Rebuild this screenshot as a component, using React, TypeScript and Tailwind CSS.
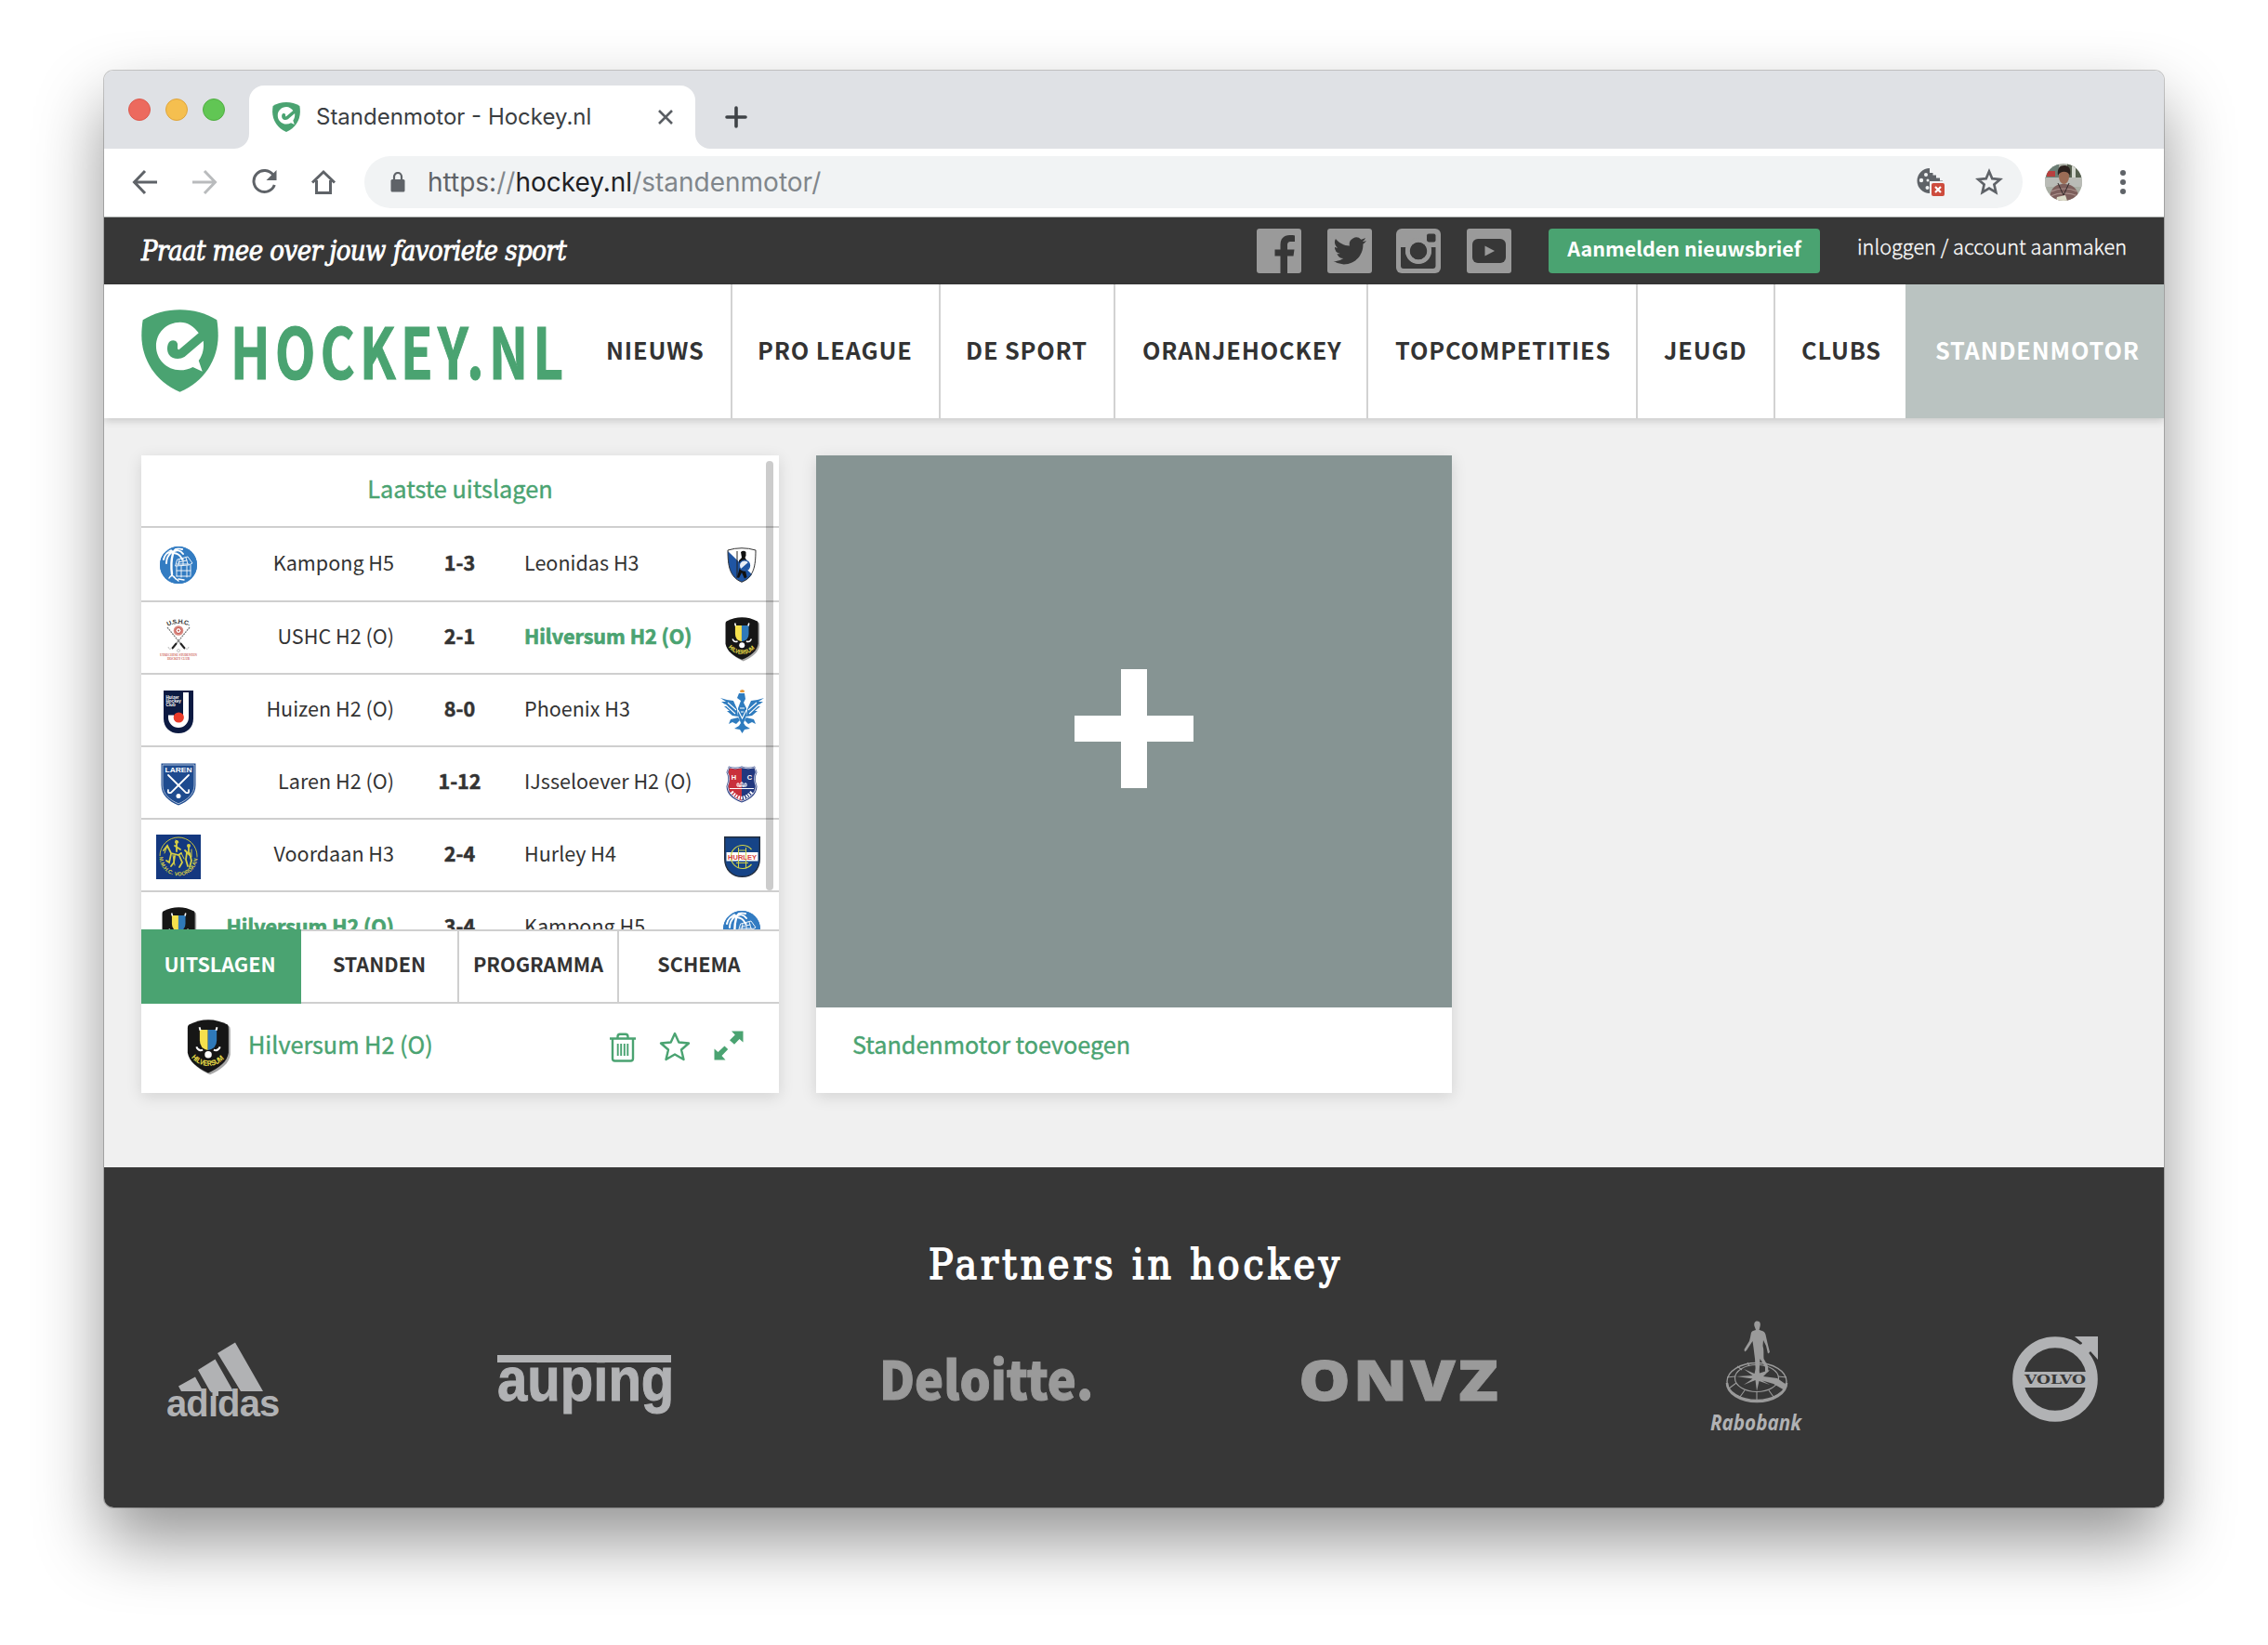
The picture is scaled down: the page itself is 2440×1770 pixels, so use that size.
import type { ReactNode } from "react";

const SANS = "font-['Noto_Sans_CJK_SC','Noto_Sans',sans-serif]";
const UI = "font-['Inter','Roboto',sans-serif]";
const SERIF = "font-['DejaVu_Serif_Condensed','DejaVu_Serif',serif]";

/* ---------- site mark ---------- */

function Shield({ className }: { className: string }) {
  return (
    <svg viewBox="36 40 250 267" preserveAspectRatio="none" className={className}>
      <path
        fill="#4aa371"
        d="M161 41C205 41 245 52 281 74C284 92 285 110 285 125C285 200 240 275 161 306C82 275 37 200 37 125C37 110 38 92 41 74C77 52 117 41 161 41Z"
      />
      <path
        fill="#fff"
        d="M222 116L158 170C149 168 157 155 152 147C147 139 137 138 129 143C118 152 118 175 126 186C137 201 160 202 176 193L237 141C240 162 236 186 222 205L234 240L203 226C190 233 176 236 162 236C118 236 84 201 84 158C84 115 118 81 162 81C186 81 208 95 222 116Z"
      />
    </svg>
  );
}

/* ---------- browser chrome ---------- */

function TabStrip() {
  return (
    <div className="flex h-[84px] items-end bg-[#dfe1e5]">
      <div className="flex h-[84px] w-[156px] items-center gap-4 pl-[26px]">
        <span className="size-6 rounded-full border border-[#dc5a4e] bg-[#ec6a5e]" />
        <span className="size-6 rounded-full border border-[#dfa53c] bg-[#f5bf4f]" />
        <span className="size-6 rounded-full border border-[#50ae41] bg-[#61c654]" />
      </div>
      <div className="relative flex h-[68px] w-[480px] items-center rounded-t-[16px] bg-white pr-6 pl-[25px]">
        <svg viewBox="0 0 16 16" className="absolute bottom-0 -left-4 size-4 fill-white">
          <path d="M16 0V16H0A16 16 0 0 0 16 0Z" />
        </svg>
        <svg viewBox="0 0 16 16" className="absolute -right-4 bottom-0 size-4 fill-white">
          <path d="M0 0V16H16A16 16 0 0 1 0 0Z" />
        </svg>
        <Shield className="h-8 w-[30px]" />
        <span className={`ml-[17px] flex-1 text-[24px] leading-8 whitespace-nowrap text-[#3a3e42] ${UI}`}>
          Standenmotor - Hockey.nl
        </span>
        <svg viewBox="0 0 16 16" className="size-4 fill-none stroke-[#5a5e63]" strokeWidth="2.6">
          <path d="M1 1L15 15M15 1L1 15" />
        </svg>
      </div>
      <svg viewBox="0 0 24 24" className="mb-[22px] ml-8 size-6 fill-none stroke-[#3f4347]" strokeWidth="3.6" strokeLinecap="round">
        <path d="M12 2V22M2 12H22" />
      </svg>
    </div>
  );
}

function Avatar() {
  return (
    <svg viewBox="0 0 40 40" className="size-10 rounded-full">
      <rect width="40" height="40" fill="#a9aea4" />
      <rect width="15" height="16" fill="#6c7f76" />
      <rect x="2" y="8" width="9" height="6" fill="#b8403f" />
      <rect x="24" width="16" height="15" fill="#56604f" />
      <rect x="29" y="2" width="4" height="14" fill="#d5d8d0" />
      <rect y="15" width="40" height="10" fill="#b9bbb6" />
      <path d="M5 40C5 26 12 22 20 22C29 22 36 26 37 40Z" fill="#7d5f5c" />
      <path d="M7 30C15 26 26 26 35 30M6 35C15 31 26 31 36 35" stroke="#a98f8a" strokeWidth="1.2" fill="none" />
      <path d="M14 21L20 34L26 21" stroke="#33292a" strokeWidth="1" fill="none" />
      <ellipse cx="20.500" cy="14" rx="5.500" ry="8" fill="#9c6c56" />
      <path d="M14 13C13 5 16 2 21 2C27 2 28 7 27 13C25 8 17 7 14 13Z" fill="#2b201d" />
      <path d="M13 36L22 34L24 40H12Z" fill="#dcdcc9" />
    </svg>
  );
}

function Toolbar() {
  return (
    <div className="flex h-[74px] items-center border-b border-[#a9adab] bg-white pb-[1px]">
      <svg viewBox="0 0 28 28" className="ml-[30px] size-7 fill-none stroke-[#5f6368]" strokeWidth="3">
        <path d="M27 14H3M14 2L2.500 14L14 26" />
      </svg>
      <svg viewBox="0 0 28 28" className="ml-9 size-7 fill-none stroke-[#b9bbbd]" strokeWidth="3">
        <path d="M1 14H25M14 2L25.500 14L14 26" />
      </svg>
      <svg viewBox="0 0 28 28" className="ml-9 size-7 fill-none stroke-[#5f6368]" strokeWidth="3">
        <path d="M24 6.500A11.500 11.500 0 1 0 25.300 17" />
        <path d="M27.500 1V12H16.500Z" fill="#5f6368" stroke="none" />
      </svg>
      <svg viewBox="0 0 28 28" className="ml-9 size-7 fill-none stroke-[#5f6368]" strokeWidth="3">
        <path d="M2 14.500L14 3L26 14.500M6.500 12V25.500H21.500V12" />
      </svg>
      <div className="ml-[30px] flex h-14 w-[1784px] items-center rounded-full bg-[#f1f3f4] pr-[21px] pl-7">
        <svg viewBox="0 0 16 22" className="h-[22px] w-4 fill-none stroke-[#5f6368]" strokeWidth="2.200">
          <path d="M4 9V5A4 4 0 0 1 12 5V9" />
          <rect x="0.500" y="8" width="15" height="13.500" rx="1.500" fill="#5f6368" stroke="none" />
        </svg>
        <span className={`ml-[24px] flex-1 text-[28px] leading-9 whitespace-nowrap text-[#80868b] ${UI}`}>
          <span className="text-[#5f6368]">https:</span>//<span className="text-[#202124]">hockey.nl</span>/standenmotor/
        </span>
        <svg viewBox="0 0 32 32" className="h-8 w-8">
          <path
            fill="#5f6368"
            d="M16 1A13.500 13.500 0 1 0 16 28V16H30V14.500H27V11.500H23V8.500H19.500V6H16Z"
          />
          <g fill="#f1f3f4">
            <circle cx="12" cy="8" r="2" />
            <circle cx="7" cy="14" r="2.200" />
            <circle cx="14" cy="14" r="1.500" />
            <circle cx="13.500" cy="22" r="2" />
          </g>
          <rect x="16" y="15" width="16" height="17" fill="#f1f3f4" />
          <rect x="18" y="17" width="14" height="14" rx="2" fill="#cd4c3d" />
          <path d="M22 21L28 27M28 21L22 27" stroke="#fff" strokeWidth="2.200" />
        </svg>
        <svg viewBox="0 0 30 30" className="ml-[33px] h-[30px] w-[30px] fill-none stroke-[#5f6368]" strokeWidth="2.700">
          <path d="M15 3.500L18.300 11.200L26.800 12L20.400 17.600L22.300 26L15 21.600L7.700 26L9.600 17.600L3.200 12L11.700 11.200Z" />
        </svg>
      </div>
      <div className="ml-6">
        <Avatar />
      </div>
      <div className="ml-[41px] flex flex-col gap-1">
        <span className="size-1.5 rounded-full bg-[#5f6368]" />
        <span className="size-1.5 rounded-full bg-[#5f6368]" />
        <span className="size-1.5 rounded-full bg-[#5f6368]" />
      </div>
    </div>
  );
}

/* ---------- site header ---------- */

function SocialIcons() {
  return (
    <div className="flex">
      <svg viewBox="0 0 48 48" className="size-12">
        <rect width="48" height="48" rx="3" fill="#9a9a9a" />
        <path fill="#373737" d="M25.500 48V29.500H19.500V22.500H25.500V17C25.500 10.500 29.500 7 35.500 7C38 7 40 7.200 41 7.400V14H37C33.800 14 33 15.500 33 18V22.500H40.500L39.500 29.500H33V48Z" />
      </svg>
      <svg viewBox="0 0 48 48" className="ml-7 size-12">
        <rect width="48" height="48" rx="3" fill="#9a9a9a" />
        <path
          transform="translate(6.500 6.200) scale(1.480)"
          fill="#373737"
          d="M23.950 4.570a10 10 0 0 1-2.820.770 4.960 4.960 0 0 0 2.160-2.720c-.950.550-2 .950-3.130 1.180a4.920 4.920 0 0 0-8.380 4.480C7.690 8.100 4.070 6.130 1.640 3.160a4.820 4.820 0 0 0-.670 2.480c0 1.710.870 3.210 2.190 4.100a4.900 4.900 0 0 1-2.230-.620v.060a4.920 4.920 0 0 0 3.950 4.830 5 5 0 0 1-2.210.080 4.940 4.940 0 0 0 4.600 3.420A9.870 9.870 0 0 1 0 19.540a13.990 13.990 0 0 0 7.560 2.210c9.050 0 14-7.500 14-13.980 0-.210 0-.420-.020-.630a9.940 9.940 0 0 0 2.460-2.550z"
        />
      </svg>
      <svg viewBox="0 0 48 48" className="ml-[26px] size-12">
        <rect width="48" height="48" rx="6" fill="#9a9a9a" />
        <rect x="33" y="5.500" width="9.500" height="9" rx="2" fill="#373737" />
        <path fill="#373737" d="M5 20H10.500A14 14 0 1 0 37.500 20H42.500V40Q42.500 43 39.500 43H8Q5 43 5 40Z" />
        <circle cx="24" cy="24" r="9.500" fill="#373737" />
        <circle cx="24" cy="24" r="11.700" fill="none" stroke="#9a9a9a" strokeWidth="4.600" />
      </svg>
      <svg viewBox="0 0 48 48" className="ml-7 size-12">
        <rect width="48" height="48" rx="3" fill="#9a9a9a" />
        <rect x="6" y="11" width="36" height="26" rx="6" fill="#373737" />
        <path d="M19.500 18.500L30 24L19.500 29.500Z" fill="#9a9a9a" />
      </svg>
    </div>
  );
}

function TopBar() {
  return (
    <div className="flex h-[72px] items-center bg-[#373737] pr-10 pl-10 text-white">
      <span className={`flex-1 text-[29px] leading-9 tracking-[-0.550px] whitespace-nowrap italic [-webkit-text-stroke:0.800px_white] ${SERIF}`}>
        Praat mee over jouw favoriete sport
      </span>
      <SocialIcons />
      <button className="ml-10 h-12 w-[292px] rounded bg-[#4aa371] pb-[6px] text-center text-[21.500px] leading-[42px] font-bold whitespace-nowrap">
        Aanmelden nieuwsbrief
      </button>
      <span className="ml-10 w-[290px] pb-[10px] text-[21.700px] leading-8 font-light whitespace-nowrap [-webkit-text-stroke:0.300px_white]">
        inloggen / account aanmaken
      </span>
    </div>
  );
}

const NAV: [string, string][] = [
  ["NIEUWS", "w-[163px] pl-[27px]"],
  ["PRO LEAGUE", "w-[224px] pl-[27px]"],
  ["DE SPORT", "w-[188px] pl-[27px]"],
  ["ORANJEHOCKEY", "w-[272px] pl-[29px]"],
  ["TOPCOMPETITIES", "w-[290px] pl-[29px]"],
  ["JEUGD", "w-[148px] pl-7"],
  ["CLUBS", "w-[140px] pl-7"],
];

function NavBar() {
  return (
    <div className="relative z-10 flex h-[144px] bg-white shadow-[0_3px_8px_rgba(0,0,0,0.160)]">
      <div className="flex w-[513px] pl-10">
        <Shield className="mt-[27px] h-[89px] w-[83px]" />
        <div className="ml-[13px] h-[144px] w-[360px]">
          <div className="origin-left scale-x-[0.750] text-[75px] leading-[139px] font-bold tracking-[7.200px] whitespace-nowrap text-[#4aa371] [-webkit-text-stroke:1.200px_#4aa371]">
            HOCKEY.NL
          </div>
        </div>
      </div>
      {NAV.map(([label, box], i) => (
        <div
          key={label}
          className={`flex items-center pb-[3px] text-[25.300px] font-bold tracking-[0.850px] whitespace-nowrap text-[#333] ${box} ${i < 6 ? "border-r-2 border-[#d2d2d2]" : ""}`}
        >
          {label}
        </div>
      ))}
      <div className="flex flex-1 items-center bg-[#bac3c1] pb-[3px] pl-8 text-[25.300px] font-bold tracking-[0.850px] whitespace-nowrap text-white">
        STANDENMOTOR
      </div>
    </div>
  );
}

/* ---------- club crests ---------- */

function Kampong() {
  return (
    <svg viewBox="0 0 40 40" className="size-10">
      <circle cx="20" cy="20" r="20" fill="#337cc2" />
      <g fill="none" stroke="#fff" strokeLinecap="round">
        <path strokeWidth="2" d="M12 6C8 6 5 9 4 14M13 6C9 9 7 13 7 18M14 6C18 3 22 4 25 8M14 7C18 7 22 9 24 14M13 5C10 2.500 8 4 6 6M15 5C17 2 21 1.500 24 3" />
        <path strokeWidth="2.400" d="M14 8C12 15 12 22 13 30" />
        <path strokeWidth="0.900" d="M19 14L30 11L35 18L31 20L17 21ZM20 17L29 15M18 19H31M18 21V32M23 21V33M29 21V33M33 20V31M18 26H33M18 32L33 32M21 14L20 20M25 13L25 20M28 12L30 19" />
        <path strokeWidth="1.500" d="M10 34C12 30 15 31 17 35M15 33L20 37M20 35L26 36" />
      </g>
      <circle cx="20" cy="20" r="19.300" fill="none" stroke="#337cc2" strokeWidth="1.400" />
    </svg>
  );
}

function Ushc() {
  return (
    <svg viewBox="0 0 40 44" className="h-[44px] w-10 overflow-visible">
      <path id="ushc-arc" d="M8.500 8Q20 2 33 8" fill="none" />
      <text fontSize="6.800" fontWeight="700" fontFamily="Liberation Sans, sans-serif" fill="#333">
        <textPath href="#ushc-arc" textLength="24">U.S.H.C.</textPath>
      </text>
      <path d="M8 9L26 31M32 9L14 31" stroke="#777" strokeWidth="1.200" strokeDasharray="2 0.800" />
      <path d="M22 26L27 32M18 26L13 32" stroke="#222" strokeWidth="2" />
      <path d="M27 31Q30 34 31 30M13 31Q10 34 9 30" stroke="#bbb" strokeWidth="1" fill="none" />
      <circle cx="20" cy="12.500" r="5.300" fill="#d98880" />
      <circle cx="20" cy="12.500" r="3" fill="#fff" stroke="#c0504a" strokeWidth="1" />
      <circle cx="20" cy="12.500" r="1" fill="#c0504a" />
      <circle cx="20" cy="34" r="1.500" fill="none" stroke="#aaa" strokeWidth="0.700" />
      <text x="20" y="39.500" textAnchor="middle" textLength="40" fontSize="3.400" fontWeight="700" fontFamily="Liberation Serif, serif" fill="#cf6a62">UTRECHTSE STUDENTEN</text>
      <text x="20" y="43.700" textAnchor="middle" textLength="24" fontSize="3.400" fontWeight="700" fontFamily="Liberation Serif, serif" fill="#cf6a62">HOCKEY CLUB</text>
    </svg>
  );
}

function Huizen() {
  return (
    <svg viewBox="0 0 32 46" className="h-[46px] w-8">
      <path d="M0 0H32V30C32 40 25 46 16 46S0 40 0 30Z" fill="#0c1a42" />
      <path d="M24 2V29A8 8 0 0 1 8 29V26.500" fill="none" stroke="#fff" strokeWidth="6" />
      <circle cx="16.300" cy="29" r="5.600" fill="#ea3b2a" />
      <g fill="#fff" fontSize="4.600" fontWeight="700" fontFamily="Liberation Sans, sans-serif">
        <text x="2.500" y="9">Huizer</text>
        <text x="2.500" y="13">Hockey</text>
        <text x="2.500" y="17">Club</text>
      </g>
    </svg>
  );
}

function Laren() {
  return (
    <svg viewBox="0 0 38 46" className="h-[46px] w-[38px]">
      <path d="M0.500 0.500H37.500V24C37.500 34 30 41 19 45.500C8 41 0.500 34 0.500 24Z" fill="#1e4b8f" />
      <path d="M2 2H36V24C36 33 29 39.500 19 43.800C9 39.500 2 33 2 24Z" fill="none" stroke="#c7d3e6" strokeWidth="0.800" />
      <text x="19" y="10" textAnchor="middle" textLength="29" lengthAdjust="spacingAndGlyphs" fontSize="8" fontWeight="700" fontFamily="Liberation Sans, sans-serif" fill="#fff">LAREN</text>
      <path d="M8 13L27 32Q31 33 30 29M30 13L11 32Q7 33 8 29" fill="none" stroke="#fff" strokeWidth="1.800" strokeLinecap="round" />
      <circle cx="19" cy="35.500" r="2.500" fill="#fff" />
    </svg>
  );
}

function Voordaan() {
  return (
    <svg viewBox="0 0 48 48" className="size-12">
      <rect width="48" height="48" fill="#14387f" />
      <circle cx="24" cy="23" r="20" fill="none" stroke="#c5c13f" strokeWidth="1" strokeDasharray="64 62" transform="rotate(180 24 23)" />
      <path id="voordaan-arc" d="M3.500 24A20.500 20.500 0 0 0 44.500 24" fill="none" />
      <text fontSize="5.800" fontWeight="700" fontFamily="Liberation Sans, sans-serif" fill="#d6cf45">
        <textPath href="#voordaan-arc" textLength="62">M.M.H.C. VOORDAAN</textPath>
      </text>
      <g fill="none" stroke="#d6cf45" strokeLinecap="round">
        <path strokeWidth="1.800" d="M8 17L12 12L16 20L24 22L27 20M16 21L14 30L11 28M25 23L28 30L25 35M20 23L19 30L16 34M22 18V9M20 12L26 16M35 13V20M33 19L32 27L34 34M36 20L38 28L36 35M31 17L36 22" />
        <path strokeWidth="1" d="M12 12L9 20M18 22L20 33M27 20L30 26M38 16L38 24M21 6L24 8" />
      </g>
      <circle cx="22" cy="8" r="2" fill="#d6cf45" />
      <circle cx="35" cy="12" r="2" fill="#d6cf45" />
    </svg>
  );
}

function Hilversum({ className }: { className: string }) {
  return (
    <svg viewBox="32 46 146 184" className={className}>
      <path
        d="M102 47C125 47 145 53 166 63C169 66 169 75 169 84V156C164 186 140 205 102 222C64 205 40 186 34 156V75C34 68 35 65 40 62C60 53 80 47 102 47Z"
        fill="#000"
        opacity="0.350"
        transform="translate(6 6)"
      />
      <path
        d="M102 47C125 47 145 53 166 63C169 66 169 75 169 84V156C164 186 140 205 102 222C64 205 40 186 34 156V75C34 68 35 65 40 62C60 53 80 47 102 47Z"
        fill="#161616"
      />
      <path d="M74 80H101V147Q74 142 74 115Z" fill="#f5e04d" />
      <path d="M101 80H130V115Q130 142 101 147Z" fill="#2f79b9" />
      <path d="M76 82L73 71M128 82L131 71M63 136Q70 152 84 146M141 136Q134 152 120 146" stroke="#fff" strokeWidth="6" fill="none" />
      <circle cx="102" cy="162" r="11.500" fill="#fff" />
      <path id="hilversum-arc" d="M46 171Q70 199 102 199Q134 199 159 171" fill="none" />
      <text fontSize="25" fontWeight="700" fontFamily="Liberation Sans, sans-serif" fill="#f0e04a">
        <textPath href="#hilversum-arc" textLength="124" lengthAdjust="spacingAndGlyphs">HILVERSUM</textPath>
      </text>
    </svg>
  );
}

function Leonidas() {
  return (
    <svg viewBox="0 0 32 38" className="h-[38px] w-8">
      <path d="M1 3Q16 -1.500 31 3C31 20 29 32 16 37.300C3 32 1 20 1 3Z" fill="#fff" />
      <path d="M1 4L27 29Q23 35 16 37.300C3 32 1 20 1 4Z" fill="#1f55a3" />
      <path d="M1 3Q16 -1.500 31 3C31 20 29 32 16 37.300C3 32 1 20 1 3Z" fill="none" stroke="#333" strokeWidth="1" />
      <path d="M11 4V33" stroke="#222" strokeWidth="1" />
      <path d="M15 5Q18 2.500 20.500 5Q21 9 19.500 11L22 15L20 25L21.500 32L19 33.500L16 27L13 33L11 32L13.500 23L13 14L16 11Z" fill="#111" />
      <circle cx="19" cy="19.500" r="5.600" fill="#e9eef6" stroke="#1f55a3" strokeWidth="1.200" />
      <path d="M15 23L23 16A5 5 0 0 1 15 23Z" fill="#1f55a3" />
    </svg>
  );
}

function Phoenix() {
  return (
    <svg viewBox="0 0 47 47" className="size-[47px]">
      <g fill="#2f7cbf">
        <path d="M0 9L7 11L14 12L18 21L19 29L13 28L7 23L10 23L4 18L8 18L1 13L6 13Z" />
        <path d="M47 9L40 11L33 12L29 21L28 29L34 28L40 23L37 23L43 18L39 18L46 13L41 13Z" />
        <path d="M20 4L26 4L27 10L25 14L28 20L28 28L25 36L27 39L32 42L26 43L23.500 47L21 43L15 42L20 39L22 36L19 28L19 20L22 12L18 9Z" />
        <path d="M19 30L11 32L9 37L13 35L17 37L21 33ZM28 30L36 32L38 37L34 35L30 37L26 33Z" />
      </g>
      <path d="M21 1L23.500 0L26 1L25.500 3H21.500Z" fill="#e79a3a" />
      <path d="M19 22L23.500 31L28 22M21 20H26M22 24H25M8 14L17 22M39 14L30 22M5 16L16 26M42 16L31 26" stroke="#fff" strokeWidth="1.100" fill="none" />
    </svg>
  );
}

function IJsseloever() {
  return (
    <svg viewBox="0 0 34 40" className="h-10 w-[34px]">
      <path d="M3 0.500Q10 3 17 0.500Q24 3 31 0.500L33.500 7Q30 13 33.500 22Q33 34 17 39.500Q1 34 0.500 22Q4 13 0.500 7Z" fill="#22387f" />
      <path d="M4 2.500Q10 4.500 17 2.500V38Q3 32 2.500 22Q5.500 14 2.500 7Z" fill="#c9303b" />
      <path d="M3 1.800Q10 4 17 1.800Q24 4 31 1.800L32.300 7Q29 13 32.300 22Q31.500 33 17 38Q2.500 33 1.700 22Q5 13 1.700 7Z" fill="none" stroke="#e8eaf2" strokeWidth="0.900" />
      <text x="8.500" y="15" textAnchor="middle" fontSize="7.500" fontWeight="700" fontFamily="Liberation Sans, sans-serif" fill="#fff">H</text>
      <text x="25.500" y="15" textAnchor="middle" fontSize="7.500" fontWeight="700" fontFamily="Liberation Sans, sans-serif" fill="#fff">C</text>
      <path d="M12 22V19H14V22H16V18H18V22H20V19H22V22M12 22H22M4 24.500H30" stroke="#fff" strokeWidth="1" fill="none" />
      <path d="M6 28Q12 34.500 17 34.500Q22 34.500 28 28" stroke="#fff" strokeWidth="3.600" strokeDasharray="1.800 1.200" fill="none" />
    </svg>
  );
}

function Hurley() {
  return (
    <svg viewBox="0 0 39 44" className="h-11 w-[39px]">
      <path d="M0.700 0.700H38.300V24C38.300 36 30 43.300 19.500 43.300S0.700 36 0.700 24Z" fill="#164487" stroke="#222d3d" strokeWidth="1.400" />
      <rect x="2.500" y="17" width="34" height="9.500" fill="#fff" />
      <path d="M29.500 14A12.500 12.500 0 1 0 29.500 30" fill="none" stroke="#cfd24a" strokeWidth="1.200" />
      <path d="M15.500 12V34M23.500 12V34M15.500 15H23.500M13 28.500H26" stroke="#cfd24a" strokeWidth="1" />
      <text x="19.500" y="24.500" textAnchor="middle" textLength="31" lengthAdjust="spacingAndGlyphs" fontSize="7.500" fontWeight="700" fontFamily="Liberation Sans, sans-serif" fill="#d8433c">HURLEY</text>
    </svg>
  );
}

/* ---------- results card ---------- */

interface Match {
  home: string;
  away: string;
  score: string;
  homeLogo: ReactNode;
  awayLogo: ReactNode;
  us?: "home" | "away";
}

const smallHilversum = <Hilversum className="ml-[1px] h-[48px] w-[38px]" />;

const MATCHES: Match[] = [
  { home: "Kampong H5", score: "1-3", away: "Leonidas H3", homeLogo: <Kampong />, awayLogo: <Leonidas /> },
  { home: "USHC H2 (O)", score: "2-1", away: "Hilversum H2 (O)", homeLogo: <Ushc />, awayLogo: smallHilversum, us: "away" },
  { home: "Huizen H2 (O)", score: "8-0", away: "Phoenix H3", homeLogo: <Huizen />, awayLogo: <Phoenix /> },
  { home: "Laren H2 (O)", score: "1-12", away: "IJsseloever H2 (O)", homeLogo: <Laren />, awayLogo: <IJsseloever /> },
  { home: "Voordaan H3", score: "2-4", away: "Hurley H4", homeLogo: <Voordaan />, awayLogo: <Hurley /> },
  { home: "Hilversum H2 (O)", score: "3-4", away: "Kampong H5", homeLogo: smallHilversum, awayLogo: <Kampong />, us: "home" },
];

const US = "font-bold text-[#4aa371] [-webkit-text-stroke:0.700px_#4aa371]";

function MatchRow({ match, tall }: { match: Match; tall: boolean }) {
  return (
    <div className={`flex items-center border-b-2 border-[#cfcfcf] text-[21.550px] leading-8 whitespace-nowrap text-[#333] ${tall ? "h-20" : "h-[78px]"}`}>
      <div className={`flex w-20 items-center justify-center ${tall ? "mt-[1px]" : "mt-[3px]"}`}>{match.homeLogo}</div>
      <div className={`w-[193px] pr-[1px] pb-[4px] text-right ${match.us === "home" ? US : ""}`}>{match.home}</div>
      <div className="w-[139px] pb-[4px] text-center font-bold [-webkit-text-stroke:0.500px_#333]">{match.score}</div>
      <div className={`w-[194px] pb-[4px] ${match.us === "away" ? US : ""}`}>{match.away}</div>
      <div className={`flex w-20 items-center justify-center ${tall ? "mt-[1px]" : "mt-[3px]"}`}>{match.awayLogo}</div>
    </div>
  );
}

function CardTabs() {
  const cell = "flex items-center justify-center border-y-2 border-y-[#cfcfcf] pb-[6px]";
  return (
    <div className="flex h-20 text-[21.550px] font-bold whitespace-nowrap text-[#333]">
      <div className="flex w-[172px] items-center justify-center bg-[#4aa371] pr-[3px] pb-[6px] text-white">UITSLAGEN</div>
      <div className={`w-[170px] border-r-2 border-r-[#cfcfcf] ${cell}`}>STANDEN</div>
      <div className={`w-[172px] border-r-2 border-r-[#cfcfcf] ${cell}`}>PROGRAMMA</div>
      <div className={`w-[172px] ${cell}`}>SCHEMA</div>
    </div>
  );
}

function ResultsCard() {
  return (
    <div className="flex h-[686px] w-[686px] flex-col bg-white shadow-[0_4px_16px_rgba(0,0,0,0.120)]">
      <div className="relative h-[510px] overflow-hidden">
        <div className="h-[78px] border-b-2 border-[#cfcfcf] text-center text-[25.300px] leading-[71px] text-[#4aa371] [-webkit-text-stroke:0.400px_#4aa371]">
          Laatste uitslagen
        </div>
        {MATCHES.map((m, i) => (
          <MatchRow key={i} match={m} tall={i === 0} />
        ))}
        <div className="absolute top-[6px] right-[6px] h-[462px] w-2 rounded-full bg-black/20" />
      </div>
      <CardTabs />
      <div className="flex h-24 items-center pl-[48px]">
        <Hilversum className="mt-[-3px] h-[60px] w-[50px]" />
        <span className="ml-[17px] w-[389px] pb-[10px] text-[25.200px] leading-9 whitespace-nowrap text-[#4aa371] [-webkit-text-stroke:0.400px_#4aa371]">
          Hilversum H2 (O)
        </span>
        <svg viewBox="0 0 28 32" className="mb-[3px] h-8 w-7 fill-none stroke-[#4aa371]" strokeWidth="2.400">
          <path d="M0 6.500H28M8.500 6V4.500Q8.500 1.800 11 1.800H17Q19.500 1.800 19.500 4.500V6M3 7V28Q3 30.500 5.500 30.500H22.500Q25 30.500 25 28V7" />
          <path strokeWidth="1.900" d="M8.700 12V25M12.200 12V25M15.800 12V25M19.300 12V25" />
        </svg>
        <svg viewBox="0 0 34 32" className="mb-[5px] ml-[25px] h-8 w-[34px] fill-none stroke-[#4aa371]" strokeWidth="2.400" strokeLinejoin="round">
          <path d="M17 2L21.300 11.500L32 12.500L24 19.500L26.500 30L17 24.500L7.500 30L10 19.500L2 12.500L12.700 11.500Z" />
        </svg>
        <svg viewBox="0 0 32 32" className="mb-[7px] ml-[25px] size-8 fill-[#4aa371]">
          <path d="M19 0.500H31.500V12.500L27.500 9L22 14.800L17 10.200L22.800 4.500Z" />
          <path d="M0.500 19.500L4.500 23L11.500 16.500L15.200 20L8.500 27L12.500 31.500H0.500Z" />
        </svg>
      </div>
    </div>
  );
}

function AddCard() {
  return (
    <div className="flex h-[686px] w-[684px] flex-col bg-white shadow-[0_4px_16px_rgba(0,0,0,0.120)]">
      <div className="flex h-[594px] items-center justify-center bg-[#869493] pb-[6px]">
        <svg viewBox="0 0 128 128" className="size-32 fill-white">
          <path d="M50 0H78V50H128V78H78V128H50V78H0V50H50Z" />
        </svg>
      </div>
      <div className="pl-[39px] text-[25.200px] leading-[78px] text-[#4aa371] [-webkit-text-stroke:0.400px_#4aa371]">
        Standenmotor toevoegen
      </div>
    </div>
  );
}

/* ---------- partners ---------- */

function Adidas() {
  return (
    <div className="h-[84px] w-[124px]">
      <svg viewBox="0 0 122 60" className="h-[60px] w-[122px] fill-[#b1b2b4]">
        <path d="M55 14L74 2.500L104 55H80ZM34 32L52.500 20.500L72 55H56V60H49.500V55H47ZM13 49.500L31 39.500L39.500 55H16Z" />
      </svg>
      <div className="-mt-[12px] font-['Liberation_Sans',Arial,sans-serif] text-[40px] leading-[40px] font-bold tracking-[-0.900px] whitespace-nowrap text-[#b1b2b4]">
        adidas
      </div>
    </div>
  );
}

function Auping() {
  return (
    <div className="w-[188px]">
      <div className="h-2 w-[187px] bg-[#b1b2b4]" />
      <div className="-mt-[14px] origin-left scale-x-[0.880] font-['Liberation_Sans',Arial,sans-serif] text-[66px] leading-[64px] font-bold whitespace-nowrap text-[#b1b2b4] [-webkit-text-stroke:1px_#b1b2b4]">
        auping
      </div>
    </div>
  );
}

function Rabobank() {
  return (
    <div className="flex w-[100px] flex-col items-center">
      <svg viewBox="0 0 68 90" className="h-[90px] w-[68px]" fill="none" stroke="#9a9a9a">
        <ellipse cx="34" cy="66.500" rx="32" ry="20" strokeWidth="1.400" />
        <path d="M2 68A32 20 0 0 0 66 68" strokeWidth="2.600" />
        <ellipse cx="34" cy="63" rx="23.500" ry="14.500" strokeWidth="1.200" />
        <path d="M2 62L11 61M4 74L12 68M16 83L21 76M34 87V78M52 83L47 76M64 74L56 68M66 62L57 61M13 50L18 54M24 46L26 50M44 46L42 50" strokeWidth="1.100" />
        <path
          fill="#9a9a9a"
          stroke="none"
          d="M34 77L32.500 65L20 70L29.500 63.500L12 61L29.500 60L20 53L31.500 58L34 48L37 57.500L48 54L41 61L56 63L66 70L64 76L52 69L40 65.500L48 70L36.500 66Z"
        />
        <path
          fill="#9a9a9a"
          stroke="none"
          d="M34.500 1.500C38 1.500 38.300 5 37.500 7.500L36.500 11C40 12 42.500 12 43.500 16L45.500 25L48 35L46 36.500L44 28L41 22L40.500 28C42 33 41 38 41.500 42L46 50L46.500 56L43 57L43 51L37.500 42L36.500 58L33 60L32 42L30.500 30L29.500 23L23 33L21 34.500L20.500 32L26 23C28 17 27 13 30 12L33 11L31.500 7C30.800 4 31.500 1.500 34.500 1.500Z"
        />
      </svg>
      <div className="mt-[4px] w-[100px]">
        <div className="origin-left scale-x-[0.860] font-['Open_Sans',sans-serif] text-[24px] leading-8 font-bold whitespace-nowrap text-[#b1b2b4] italic">
          Rabobank
        </div>
      </div>
    </div>
  );
}

function Volvo() {
  return (
    <svg viewBox="0 0 92 92" className="size-[92px]">
      <circle cx="46" cy="46" r="39.800" fill="none" stroke="#b1b2b4" strokeWidth="12" />
      <rect x="11" y="38" width="70" height="17" fill="#b1b2b4" />
      <path d="M67 0L92 0V25L84 16L78 22L68 12L75 7Z" fill="#b1b2b4" />
      <path d="M67.500 2.500L74.500 8M84 18L90 25.500" stroke="#373737" strokeWidth="2" />
      <text x="46" y="51.300" textAnchor="middle" textLength="66" lengthAdjust="spacingAndGlyphs" fontSize="13" fontWeight="700" fontFamily="DejaVu Serif, serif" fill="#373737">VOLVO</text>
    </svg>
  );
}

function Partners() {
  return (
    <div className="h-[366px] bg-[#373737]">
      <div className={`pt-[77px] pl-[4px] text-center text-[44px] leading-[56px] tracking-[3.900px] text-white [-webkit-text-stroke:1.500px_white] ${SERIF}`}>
        Partners in hockey
      </div>
      <div className="mt-[23px] flex h-[144px] items-center pl-[67px]">
        <div className="w-[356px]"><Adidas /></div>
        <div className="mt-[5px] w-[411px]"><Auping /></div>
        <div className="mt-[-7px] w-[451px]">
          <div className="origin-left scale-x-[0.925] text-[56.500px] leading-[70px] font-black text-[#9a9a9a] [-webkit-text-stroke:1px_#9a9a9a]">Deloitte.</div>
        </div>
        <div className="mt-[-1px] w-[443px]">
          <div className="origin-left scale-x-[1.170] font-['Open_Sans',sans-serif] text-[60px] leading-[70px] font-extrabold tracking-[2.500px] text-[#9a9a9a] [-webkit-text-stroke:0.800px_#9a9a9a]">ONVZ</div>
        </div>
        <div className="mt-[-3px] w-[325px]"><Rabobank /></div>
        <Volvo />
      </div>
    </div>
  );
}

export default function App() {
  return (
    <div className={`h-[1770px] w-[2440px] overflow-hidden bg-white pt-[76px] pl-[112px] ${SANS}`}>
      <div className="flex h-[1546px] w-[2216px] flex-col rounded-[10px] shadow-[0_0_0_1px_rgba(0,0,0,0.200),0_36px_72px_rgba(0,0,0,0.420)]">
        <div className="flex h-full flex-col overflow-hidden rounded-[10px]">
          <TabStrip />
          <Toolbar />
          <TopBar />
          <NavBar />
          <div className="flex h-[806px] gap-10 bg-[#f0f0f0] pt-10 pl-10">
            <ResultsCard />
            <AddCard />
          </div>
          <Partners />
        </div>
      </div>
    </div>
  );
}
